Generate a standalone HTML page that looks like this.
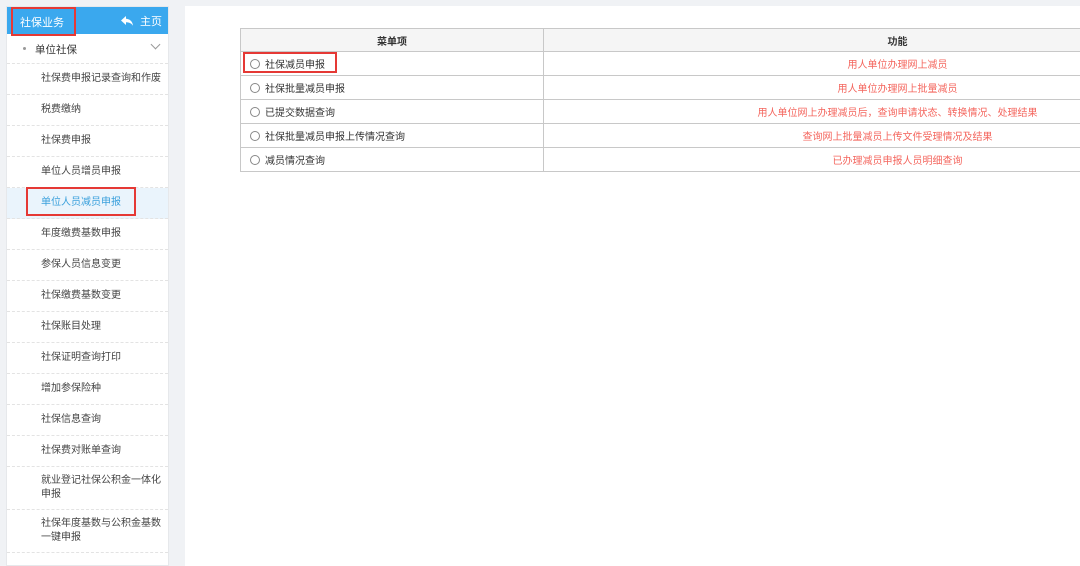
<!DOCTYPE html>
<html><head><meta charset="utf-8">
<style>
*{margin:0;padding:0;box-sizing:border-box}
body{width:1080px;height:552px;overflow:hidden;background:#f0f2f5;font-family:"Liberation Sans","Noto Sans CJK SC",sans-serif;font-size:11px;color:#333;position:relative}
.side{position:absolute;left:6px;top:6px;width:163px;height:560px;background:#fff;border:1px solid #e6e8eb}
.hd{height:27px;background:#3aa8ee;color:#fff;font-size:11px;position:relative}
.hd .t{position:absolute;left:13px;top:7px}
.hd .h{position:absolute;right:6px;top:6px}
.grp{height:30px;position:relative;border-bottom:1px dashed #e3e3e3}
.grp .d{position:absolute;left:16px;top:13px;width:3px;height:3px;background:#999;border-radius:50%}
.grp .l{position:absolute;left:28px;top:8px;font-size:10.5px}
.grp .c{position:absolute;right:9px;top:7px;width:7px;height:7px;border-right:1px solid #999;border-bottom:1px solid #999;transform:rotate(45deg)}
.it{height:31px;line-height:30px;padding-left:34px;border-bottom:1px dashed #e3e3e3;color:#444;font-size:10px;white-space:nowrap}
.it.two{height:43px;line-height:14px;padding-top:7px;white-space:normal;padding-right:2px}
.it.act{background:#eaf4fc;color:#3aa0dc}
.red{position:absolute;border:2px solid #e53935}
.main{position:absolute;left:185px;top:6px;width:900px;height:560px;background:#fff}
table{position:absolute;left:240px;top:28px;width:1012px;border-collapse:collapse}
td,th{border:1px solid #c8c8c8;height:24px;font-size:10px}
th{background:#f5f5f5;font-weight:bold;color:#333;height:23px}
td.a{padding-left:9px;width:303px}
td.b{text-align:center;color:#f4665e}
.r{display:inline-block;width:10px;height:10px;border:1px solid #888;border-radius:50%;vertical-align:-1px;margin-right:5px}
</style></head><body>
<div class="side">
 <div class="hd"><span class="t">社保业务</span><span class="h"><svg width="14" height="12" viewBox="0 0 14 12" style="vertical-align:-2px;margin-right:6px"><path d="M6 1L1 5.5 6 10V7.3c3.5 0 5.5 1 7 3.5-0.3-4-3-6.8-7-7z" fill="#fff"/></svg>主页</span></div>
 <div class="grp"><span class="d"></span><span class="l">单位社保</span><span class="c"></span></div>
 <div class="it">社保费申报记录查询和作废</div>
 <div class="it">税费缴纳</div>
 <div class="it">社保费申报</div>
 <div class="it">单位人员增员申报</div>
 <div class="it act">单位人员减员申报</div>
 <div class="it">年度缴费基数申报</div>
 <div class="it">参保人员信息变更</div>
 <div class="it">社保缴费基数变更</div>
 <div class="it">社保账目处理</div>
 <div class="it">社保证明查询打印</div>
 <div class="it">增加参保险种</div>
 <div class="it">社保信息查询</div>
 <div class="it">社保费对账单查询</div>
 <div class="it two">就业登记社保公积金一体化申报</div>
 <div class="it two">社保年度基数与公积金基数一键申报</div>
</div>
<div class="main"></div>
<table>
<tr><th>菜单项</th><th>功能</th></tr>
<tr><td class="a"><span class="r"></span>社保减员申报</td><td class="b">用人单位办理网上减员</td></tr>
<tr><td class="a"><span class="r"></span>社保批量减员申报</td><td class="b">用人单位办理网上批量减员</td></tr>
<tr><td class="a"><span class="r"></span>已提交数据查询</td><td class="b">用人单位网上办理减员后，查询申请状态、转换情况、处理结果</td></tr>
<tr><td class="a"><span class="r"></span>社保批量减员申报上传情况查询</td><td class="b">查询网上批量减员上传文件受理情况及结果</td></tr>
<tr><td class="a"><span class="r"></span>减员情况查询</td><td class="b">已办理减员申报人员明细查询</td></tr>
</table>
<div class="red" style="left:11px;top:7px;width:65px;height:29px"></div>
<div class="red" style="left:26px;top:187px;width:110px;height:29px"></div>
<div class="red" style="left:243px;top:52px;width:94px;height:21px"></div>
</body></html>
